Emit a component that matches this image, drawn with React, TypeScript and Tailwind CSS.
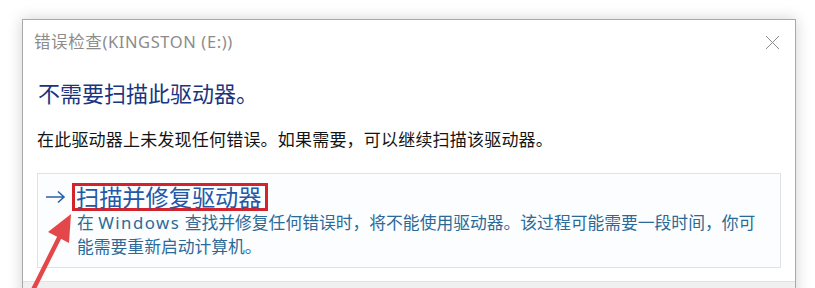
import React from 'react'

const font = { fontFamily: '"Noto Sans", "Noto Sans CJK SC", sans-serif' }

// 错误检查对话框：驱动器无需扫描
export default function App() {
  return (
    <div className="relative w-[815px] h-[288px] overflow-hidden bg-white pt-[19px] pl-[22px]" style={font}>
      <div className="w-[774px] h-[300px] border border-[#a9a9a9] bg-white shadow-[0_0_14px_rgba(0,0,0,0.18)] flex flex-col">
        {/* 标题栏 */}
        <div className="h-[45px] flex items-center justify-between pl-[11px] pr-[15px]">
          <span className="text-[16.5px] tracking-[0.6px] text-[#8c8c8c] leading-none">错误检查(KINGSTON (E:))</span>
          <svg width="15" height="15" viewBox="0 0 15 15" className="text-[#8a8a8a]">
            <path d="M1 1 L14 14 M14 1 L1 14" stroke="currentColor" strokeWidth="1" fill="none" />
          </svg>
        </div>

        {/* 主说明 */}
        <div className="mt-[13px] pl-[15px] text-[22px] leading-[30px] text-[#1a3580]">
          不需要扫描此驱动器。
        </div>
        <div className="mt-[20px] pl-[14px] text-[17px] tracking-[0.2px] leading-[24px] text-[#141414]">
          在此驱动器上未发现任何错误。如果需要，可以继续扫描该驱动器。
        </div>

        {/* 命令链接 */}
        <div className="mt-[21px] mx-[14px] h-[95px] border border-[#dde3e8] bg-[#fbfdfe] pt-[9px] pl-[7px]">
          <div className="flex items-center h-[28px]">
            <svg width="21" height="14" viewBox="0 0 21 14" className="text-[#2a62a8]">
              <path d="M1 7 H19 M13 1.5 L19 7 L13 12.5" stroke="currentColor" strokeWidth="1.6" fill="none" />
            </svg>
            <span className="ml-[6px] h-[28px] border-[3px] border-[#d5232c] pl-[1px] pr-[3px] text-[23.2px] leading-[22px] text-[#2458a6] whitespace-nowrap">
              扫描并修复驱动器
            </span>
          </div>
          <div className="pl-[32px] text-[16.8px] leading-[24px] text-[#2b6a98] whitespace-nowrap">
            在 <span className="tracking-[1.5px]">Windows</span> 查找并修复任何错误时，将不能使用驱动器。该过程可能需要一段时间，你可
            <br />
            能需要重新启动计算机。
          </div>
        </div>

        {/* 底部按钮区 */}
        <div className="mt-[13px] flex-1 bg-[#f0f0f0] border-t border-[#e2e2e2]" />
      </div>

      {/* 标注箭头 */}
      <svg className="absolute inset-0 pointer-events-none" width="815" height="288" viewBox="0 0 815 288">
        <line x1="33" y1="290" x2="60" y2="236" stroke="#e4474a" strokeWidth="4.5" strokeLinecap="round" />
        <polygon points="71,214 48,232 69,243" fill="#e4474a" />
      </svg>
    </div>
  )
}
